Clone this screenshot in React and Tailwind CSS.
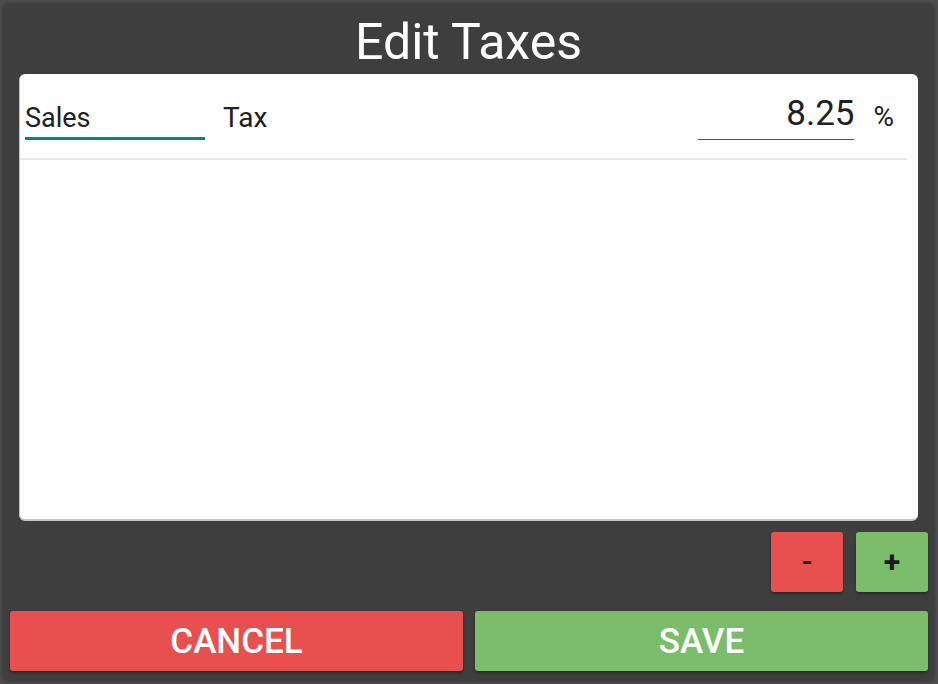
import React from "react";

const App = () => {
  return (
    <div className="w-[938px] h-[684px] bg-[#4f4f4f] pl-[4px] pt-[5px] pr-[5px] pb-[4px] font-['Roboto',sans-serif]">
      <div className="h-full bg-[#3e3e3e] flex flex-col shadow-[0_0_6px_rgba(0,0,0,0.5)]">
        {/* Title */}
        <div className="h-[69px] pt-[5px] flex items-center justify-center text-white text-[50px] leading-none">
          Edit Taxes
        </div>

        {/* Taxes list */}
        <div className="mx-[15px] h-[447px] bg-white rounded-[6px] border-l border-b-2 border-[#c4c4c4] flex flex-col">
          <div className="h-[84px] flex items-end pb-[18px] pl-[5px] pr-[24px] text-[#202020]">
            <div className="w-[180px] h-[44px] pt-[4px] border-b-[3px] border-[#00897b] flex items-center text-[27px] leading-none">
              Sales
            </div>
            <div className="ml-[18px] h-[44px] flex items-center text-[28px] leading-none">Tax</div>
            <div className="flex-1" />
            <div className="w-[156px] h-[44px] border-b border-[#555] flex items-center justify-end pb-[8px] text-[35px] leading-none">
              8.25
            </div>
            <div className="ml-[19px] h-[44px] flex items-center pb-[2px] text-[28px] leading-none">%</div>
          </div>
          <div className="h-[2px] bg-[#e6e6e6] mr-[11px]" />
        </div>

        {/* Add / remove */}
        <div className="mt-[11px] h-[60px] flex justify-end gap-[13px] pr-[5px]">
          <button className="w-[72px] h-full bg-[#e84f4f] rounded-[3px] shadow-[0_2px_3px_rgba(0,0,0,0.35)] text-[#1a1a1a] text-[28px] font-bold leading-none">
            -
          </button>
          <button className="w-[72px] h-full bg-[#7bbd6a] rounded-[3px] shadow-[0_2px_3px_rgba(0,0,0,0.35)] text-[#1a1a1a] text-[30px] font-bold leading-none">
            +
          </button>
        </div>

        {/* Actions */}
        <div className="mt-[19px] h-[60px] flex gap-[12px] pl-[6px] pr-[5px]">
          <button className="flex-1 h-full bg-[#e84f4f] rounded-[3px] shadow-[0_2px_3px_rgba(0,0,0,0.35)] text-white text-[35px] font-medium leading-none">
            CANCEL
          </button>
          <button className="flex-1 h-full bg-[#7bbd6a] rounded-[3px] shadow-[0_2px_3px_rgba(0,0,0,0.35)] text-white text-[35px] font-medium leading-none">
            SAVE
          </button>
        </div>
      </div>
    </div>
  );
};

export default App;
